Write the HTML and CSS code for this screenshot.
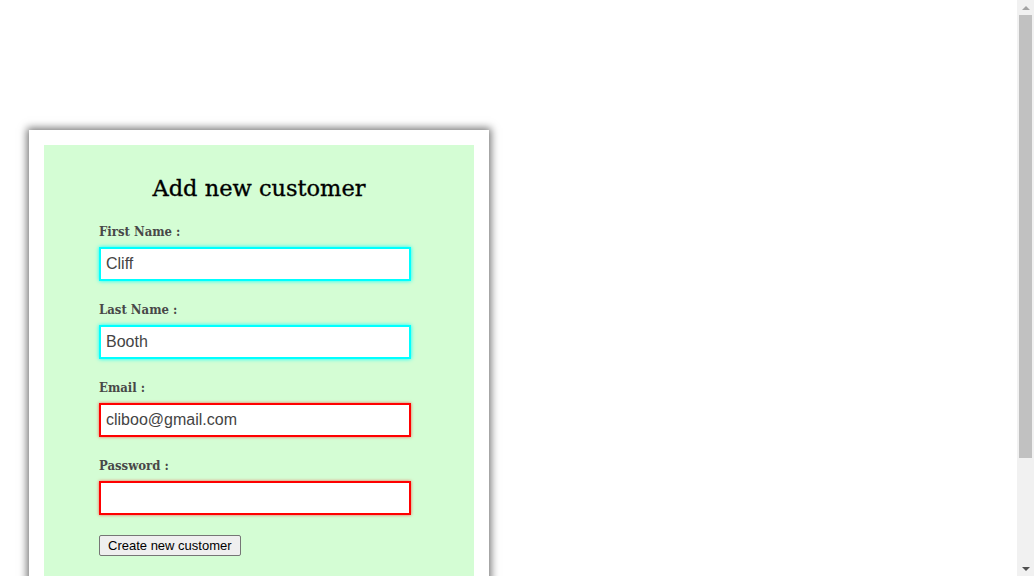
FILE: index.html
```html
<!DOCTYPE html>
<html>
<head>
<meta charset="utf-8">
<title>Add new customer</title>
<link rel="stylesheet" href="styles.css">
</head>
<body>
<div class="page">
  <div class="card">
    <form class="panel">
      <h2 class="title">Add new customer</h2>
      <div class="field">
        <label class="label">First Name :</label>
        <input class="input valid" type="text" value="Cliff">
      </div>
      <div class="field">
        <label class="label">Last Name :</label>
        <input class="input valid" type="text" value="Booth">
      </div>
      <div class="field">
        <label class="label">Email :</label>
        <input class="input invalid" type="text" value="cliboo@gmail.com">
      </div>
      <div class="field">
        <label class="label">Password :</label>
        <input class="input invalid" type="password" value="">
      </div>
      <button class="btn" type="button">Create new customer</button>
    </form>
  </div>
</div>
<div class="scrollbar" aria-hidden="true">
  <div class="arrow up"></div>
  <div class="track"><div class="thumb"></div></div>
  <div class="arrow down"></div>
</div>
</body>
</html>
```

FILE: styles.css
```css
html, body {
  margin: 0;
  padding: 0;
  background: #fff;
}
.page {
  padding: 130px 0 60px 29px;
}
.card {
  width: 430px;
  padding: 15px;
  background: #fff;
  box-shadow: 0 0 8px 2px rgba(0,0,0,0.55);
}
.panel {
  background: #d4fdd4;
  padding: 24px 0 40px 55px;
  display: flex;
  flex-direction: column;
  align-items: flex-start;
}
.title {
  align-self: stretch;
  margin: 0 0 17px -55px;
  text-align: center;
  font-family: "DejaVu Serif", serif;
  font-weight: normal;
  font-size: 22.5px;
  line-height: 38px;
  color: #000;
  -webkit-text-stroke: 0.35px #000;
}
.field {
  display: flex;
  flex-direction: column;
  align-items: flex-start;
  margin-bottom: 21px;
}
.field:last-of-type {
  margin-bottom: 20px;
}
.label {
  font-family: "DejaVu Serif Condensed", "DejaVu Serif", serif;
  font-weight: bold;
  font-size: 13px;
  line-height: 16px;
  color: #484848;
  margin-bottom: 7px;
}
.input {
  box-sizing: border-box;
  width: 312px;
  height: 34px;
  margin: 0;
  padding: 0 5px;
  font-family: "Liberation Sans", Arial, sans-serif;
  font-size: 16px;
  color: #444;
  background: #fff;
  border: 2px solid;
  outline: none;
}
.valid {
  border-color: #00ffff;
  box-shadow: 0 0 4px #00ffff;
}
.invalid {
  border-color: #ff0000;
  box-shadow: 0 0 3px rgba(255,0,0,0.6);
}
.btn {
  height: 21px;
  padding: 0 8px;
  font-family: "Liberation Sans", Arial, sans-serif;
  font-size: 13px;
  color: #000;
  background: #efefef;
  border: 1px solid #767676;
  border-radius: 2px;
}
.scrollbar {
  position: fixed;
  top: 0;
  right: 0;
  bottom: 0;
  width: 17px;
  background: #f1f1f1;
  display: flex;
  flex-direction: column;
}
.arrow {
  height: 15px;
  display: flex;
  align-items: center;
  justify-content: center;
}
.arrow::before {
  content: "";
  width: 0;
  height: 0;
  border-left: 4px solid transparent;
  border-right: 4px solid transparent;
}
.arrow.up::before {
  border-bottom: 4px solid #a3a3a3;
}
.arrow.down::before {
  border-top: 4px solid #505050;
}
.track {
  flex: 1;
  padding: 0 2px;
}
.thumb {
  height: 443px;
  background: #c1c1c1;
}
```
